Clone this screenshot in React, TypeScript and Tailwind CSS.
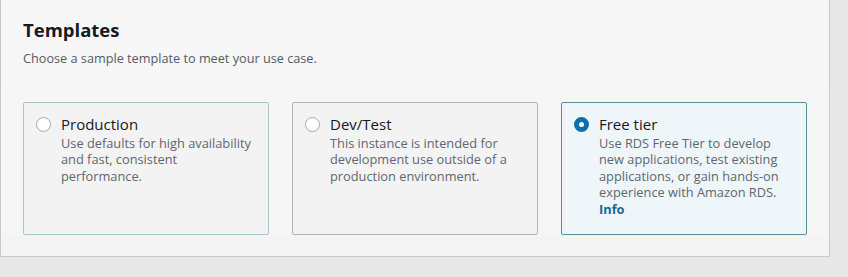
const cards = [
  {
    title: 'Production',
    desc: 'Use defaults for high availability and fast, consistent performance.',
    selected: false,
    border: 'border-[#a9c3cf]',
  },
  {
    title: 'Dev/Test',
    desc: 'This instance is intended for development use outside of a production environment.',
    selected: false,
    border: 'border-[#b4b4b4]',
  },
  {
    title: 'Free tier',
    desc: 'Use RDS Free Tier to develop new applications, test existing applications, or gain hands-on experience with Amazon RDS.',
    selected: true,
    border: 'border-[#5d8c99]',
  },
]

export default function App() {
  return (
    <div className="h-[277px] w-[848px] bg-[#e8e8e8] font-['Open_Sans',sans-serif]">
      <div className="h-[257px] w-[830px] border-l border-r border-b border-[#c8c8c8] bg-[#f4f4f4]">
        {/* Header */}
        <div className="h-[86px] bg-[#f7f7f7] px-[22px] pt-[16px]">
          <h2 className="text-[18.5px] font-bold leading-[28px] text-[#16191f]">Templates</h2>
          <p className="mt-[5px] text-[12.7px] leading-[18px] text-[#545b64]">
            Choose a sample template to meet your use case.
          </p>
        </div>

        {/* Cards */}
        <div className="flex gap-[23px] bg-[#f6f6f6] px-[22px] pt-[16px]">
          {cards.map(c => (
            <div
              key={c.title}
              className={`flex h-[133px] w-[247px] gap-[10px] border rounded-[2px] px-[12px] pt-[11px] ${c.border} ${c.selected ? 'bg-[#eef6fa]' : 'bg-[#f3f3f3]'}`}
            >
              <div className="pt-[3px]">
                {c.selected ? (
                  <span className="block h-[15px] w-[15px] rounded-full border-[5px] border-[#0a6eaf] bg-white" />
                ) : (
                  <span className="block h-[15px] w-[15px] rounded-full border-[1.5px] border-[#a8a8a8] bg-white" />
                )}
              </div>
              <div className="flex-1">
                <div className="text-[15px] leading-[20px] text-[#16191f]">{c.title}</div>
                <p className="mt-[1px] text-[12.8px] leading-[16.4px] text-[#5f6670]">{c.desc}</p>
                {c.selected && (
                  <div className="text-[12.8px] font-bold leading-[16.4px] text-[#18678f]">Info</div>
                )}
              </div>
            </div>
          ))}
        </div>
      </div>
    </div>
  )
}
